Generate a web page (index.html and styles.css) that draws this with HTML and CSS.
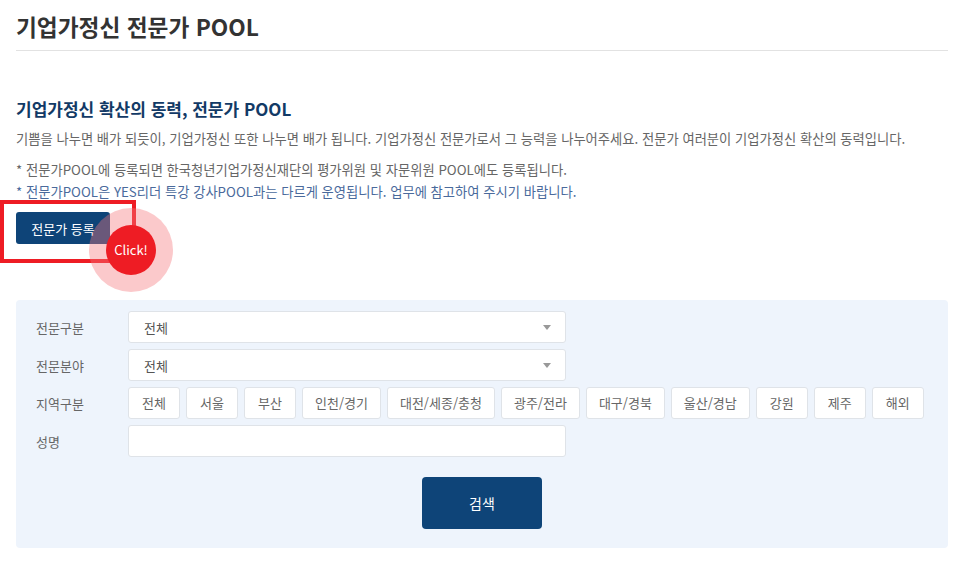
FILE: index.html
```html
<!DOCTYPE html>
<html lang="ko">
<head>
  <meta charset="UTF-8">
  <title>기업가정신 전문가 POOL</title>
  <link rel="stylesheet" href="styles.css">
</head>
<body>
  <div id="page">
    <h1 class="page-title">기업가정신 전문가 POOL</h1>

    <div class="intro">
      <h2>기업가정신 확산의 동력, 전문가 POOL</h2>
      <p class="lead">기쁨을 나누면 배가 되듯이, 기업가정신 또한 나누면 배가 됩니다. 기업가정신 전문가로서 그 능력을 나누어주세요. 전문가 여러분이 기업가정신 확산의 동력입니다.</p>
      <p class="note">* 전문가POOL에 등록되면 한국청년기업가정신재단의 평가위원 및 자문위원 POOL에도 등록됩니다.</p>
      <p class="note blue">* 전문가POOL은 YES리더 특강 강사POOL과는 다르게 운영됩니다. 업무에 참고하여 주시기 바랍니다.</p>

      <div class="register-wrap">
        <button class="btn-register">전문가 등록</button>
        <div class="highlight-box"></div>
        <div class="click-ring"></div>
        <div class="click-dot">Click!</div>
      </div>
    </div>

    <div class="search-box">
      <div class="row">
        <label>전문구분</label>
        <div class="select"><span>전체</span><i class="caret"></i></div>
      </div>
      <div class="row">
        <label>전문분야</label>
        <div class="select"><span>전체</span><i class="caret"></i></div>
      </div>
      <div class="row">
        <label>지역구분</label>
        <div class="regions">
          <span class="region">전체</span>
          <span class="region">서울</span>
          <span class="region">부산</span>
          <span class="region">인천/경기</span>
          <span class="region">대전/세종/충청</span>
          <span class="region">광주/전라</span>
          <span class="region">대구/경북</span>
          <span class="region">울산/경남</span>
          <span class="region">강원</span>
          <span class="region">제주</span>
          <span class="region">해외</span>
        </div>
      </div>
      <div class="row">
        <label>성명</label>
        <div class="input"></div>
      </div>
      <div class="actions">
        <button class="btn-search">검색</button>
      </div>
    </div>
  </div>
</body>
</html>
```

FILE: styles.css
```css
body {
  margin: 0;
  font-family: "Noto Sans CJK KR", "Noto Sans", sans-serif;
  background: #fff;
  color: #333;
}

#page {
  padding: 0 20px 0 16px;
}

.page-title {
  margin: 0;
  padding: 12px 0 8px;
  font-size: 22.7px;
  font-weight: bold;
  color: #333;
  border-bottom: 1px solid #e2e2e2;
  line-height: 30px;
}

.intro {
  padding-top: 46px;
}

.intro h2 {
  margin: 0 0 8px;
  font-size: 17px;
  line-height: 24px;
  color: #123a66;
}

.intro p {
  margin: 0;
  font-size: 13.3px;
  color: #666;
  line-height: 20px;
}

.intro .lead {
  margin-bottom: 10px;
}

.intro .note {
  line-height: 22px;
}

.intro .note.blue {
  color: #4a6a9c;
}

.register-wrap {
  position: relative;
  height: 90px;
  padding-top: 9px;
}

.btn-register {
  background: #0e4478;
  color: #fff;
  border: 0;
  border-radius: 3px;
  width: 94px;
  height: 32px;
  font-family: inherit;
  font-size: 13px;
  padding: 0;
}

.highlight-box {
  position: absolute;
  left: -16px;
  top: -3px;
  width: 128px;
  height: 55px;
  border: 4px solid #ee1c24;
}

.click-ring {
  position: absolute;
  left: 73px;
  top: 5px;
  width: 84px;
  height: 84px;
  border-radius: 50%;
  background: rgba(246, 120, 124, 0.4);
}

.click-dot {
  position: absolute;
  left: 90px;
  top: 22px;
  width: 50px;
  height: 50px;
  border-radius: 50%;
  background: #ee1c24;
  color: #fff;
  font-size: 13px;
  line-height: 50px;
  text-align: center;
}

.search-box {
  background: #eef4fc;
  border-radius: 4px;
  padding: 11px 20px 19px;
  margin-top: -2px;
}

.row {
  display: flex;
  align-items: center;
  margin-bottom: 6px;
}

.row label {
  flex-shrink: 0;
  width: 92px;
  font-size: 13px;
  color: #666;
}

.select,
.input {
  box-sizing: border-box;
  width: 438px;
  height: 32px;
  background: #fff;
  border: 1px solid #dfe3e8;
  border-radius: 3px;
  display: flex;
  align-items: center;
  justify-content: space-between;
  padding: 0 14px 0 15px;
  font-size: 13px;
  font-weight: 400;
  color: #555;
}

.caret {
  width: 0;
  height: 0;
  border-left: 4px solid transparent;
  border-right: 4px solid transparent;
  border-top: 5px solid #999;
}

.regions {
  display: flex;
  gap: 6px;
}

.region {
  box-sizing: border-box;
  flex-shrink: 0;
  white-space: nowrap;
  min-width: 52px;
  text-align: center;
  height: 32px;
  line-height: 30px;
  padding: 0 12px;
  background: #fff;
  border: 1px solid #dfe3e8;
  border-radius: 3px;
  font-size: 13px;
  color: #666;
}

.actions {
  display: flex;
  justify-content: center;
  padding-top: 14px;
}

.btn-search {
  width: 120px;
  height: 52px;
  background: #0e4478;
  color: #fff;
  border: 0;
  border-radius: 4px;
  font-family: inherit;
  font-size: 14px;
}
```
